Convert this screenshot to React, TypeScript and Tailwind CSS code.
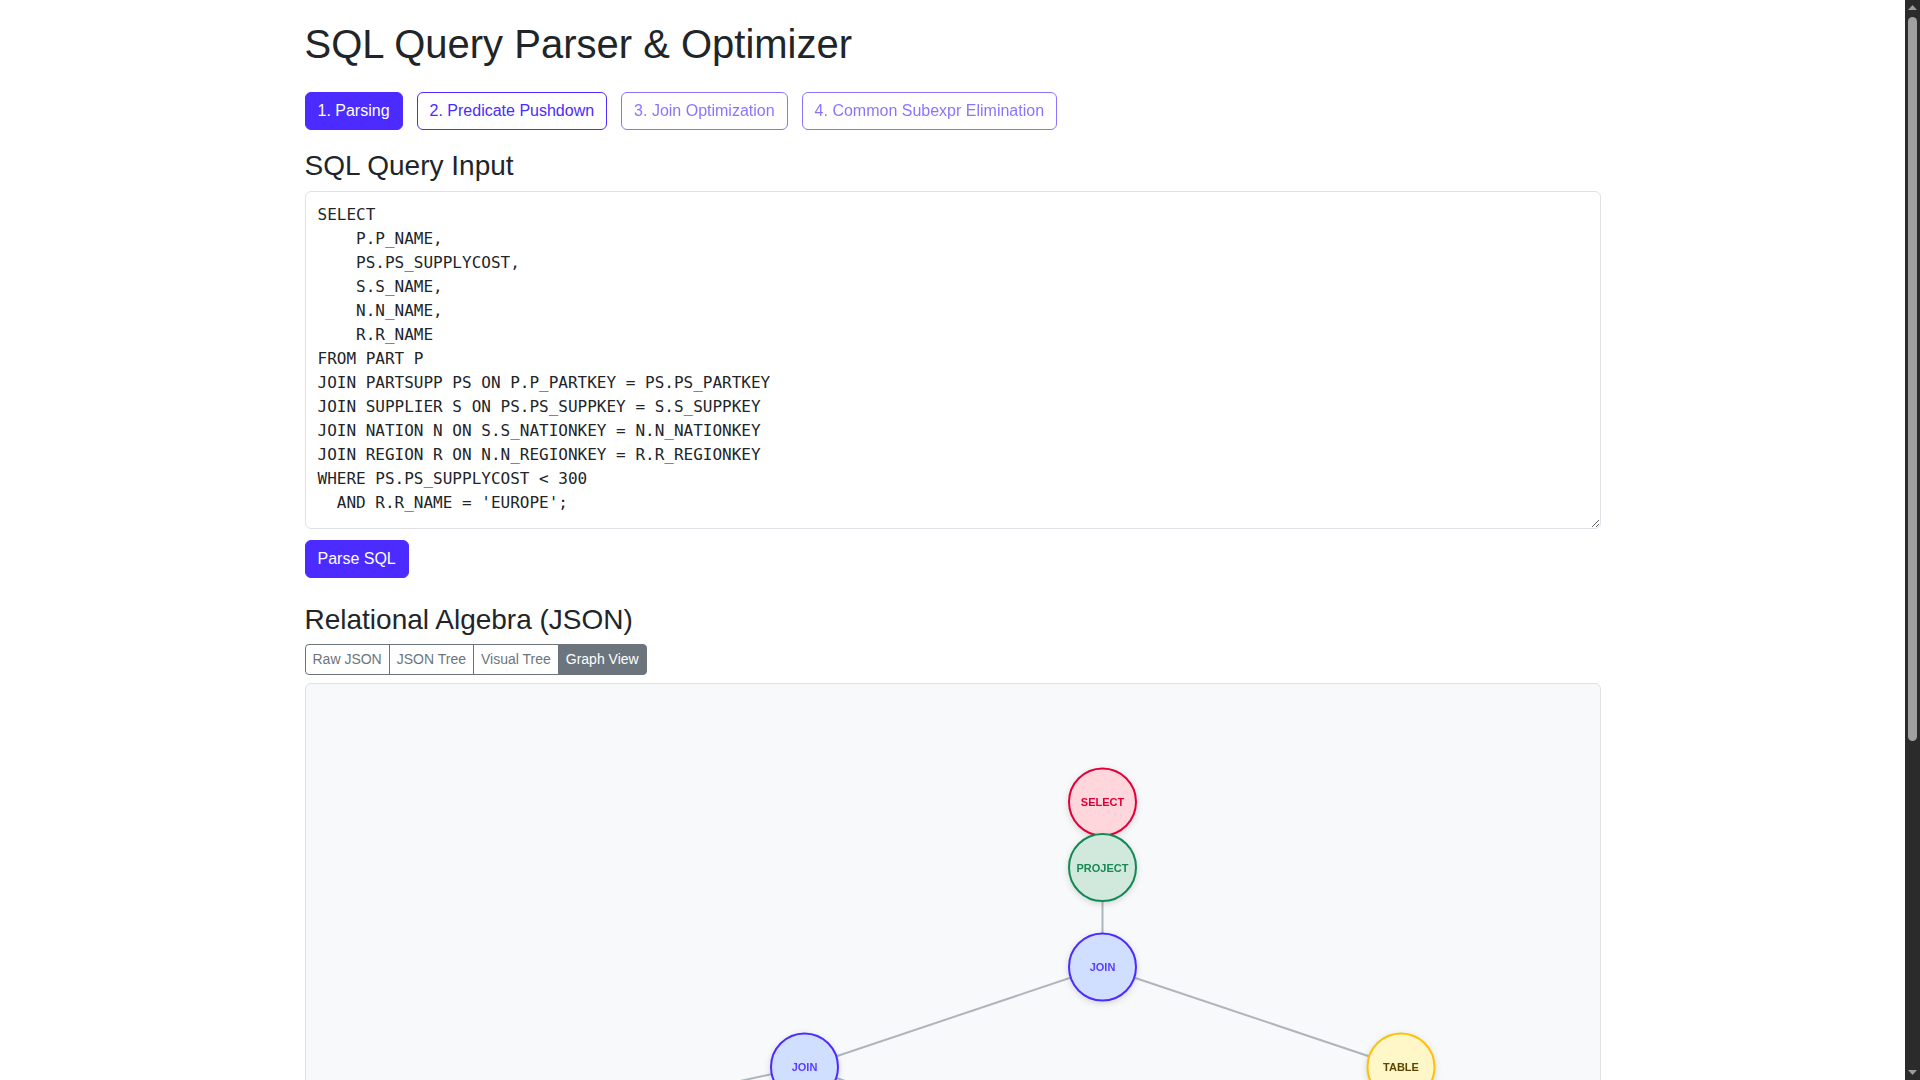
import React from 'react'

const SQL = `SELECT
    P.P_NAME,
    PS.PS_SUPPLYCOST,
    S.S_NAME,
    N.N_NAME,
    R.R_NAME
FROM PART P
JOIN PARTSUPP PS ON P.P_PARTKEY = PS.PS_PARTKEY
JOIN SUPPLIER S ON PS.PS_SUPPKEY = S.S_SUPPKEY
JOIN NATION N ON S.S_NATIONKEY = N.N_NATIONKEY
JOIN REGION R ON N.N_REGIONKEY = R.R_REGIONKEY
WHERE PS.PS_SUPPLYCOST < 300
  AND R.R_NAME = 'EUROPE';`

type Kind = 'select' | 'project' | 'join' | 'table'

interface GraphNode {
  id: string
  label: string
  x: number
  y: number
  kind: Kind
}

const palette: Record<Kind, { fill: string; stroke: string; text: string }> = {
  select: { fill: '#ffd6dc', stroke: '#e3003a', text: '#dc0038' },
  project: { fill: '#d1e9dd', stroke: '#0f8a52', text: '#198754' },
  join: { fill: '#d0dfff', stroke: '#4b2bff', text: '#5a3dff' },
  table: { fill: '#fff7c7', stroke: '#ffc107', text: '#5c4503' },
}

// positions are relative to the inside of the graph panel
const nodes: GraphNode[] = [
  { id: 'sel', label: 'SELECT', x: 796.5, y: 118, kind: 'select' },
  { id: 'proj', label: 'PROJECT', x: 796.5, y: 183.5, kind: 'project' },
  { id: 'j1', label: 'JOIN', x: 796.5, y: 283, kind: 'join' },
  { id: 'j2', label: 'JOIN', x: 498.5, y: 383, kind: 'join' },
  { id: 't1', label: 'TABLE', x: 1095, y: 383, kind: 'table' },
  { id: 'j3', label: 'JOIN', x: 190, y: 450, kind: 'join' },
  { id: 't2', label: 'TABLE', x: 790, y: 483, kind: 'table' },
  { id: 't3', label: 'TABLE', x: 90, y: 560, kind: 'table' },
  { id: 't4', label: 'TABLE', x: 330, y: 570, kind: 'table' },
]

const edges: [string, string][] = [
  ['sel', 'proj'],
  ['proj', 'j1'],
  ['j1', 'j2'],
  ['j1', 't1'],
  ['j2', 'j3'],
  ['j2', 't2'],
  ['j3', 't3'],
  ['j3', 't4'],
]

function GraphView() {
  const byId = (id: string) => nodes.find((n) => n.id === id)!
  return (
    <svg className="block w-full h-full">
      {edges.map(([a, b]) => {
        const s = byId(a)
        const t = byId(b)
        return <line key={a + b} x1={s.x} y1={s.y} x2={t.x} y2={t.y} stroke="#adb5bd" strokeWidth={2} />
      })}
      {nodes.map((n) => {
        const c = palette[n.kind]
        return (
          <g key={n.id} className="drop-shadow-[0_2px_3px_rgba(0,0,0,0.14)]">
            <circle cx={n.x} cy={n.y} r={33.5} fill={c.fill} stroke={c.stroke} strokeWidth={2} />
            <text
              x={n.x}
              y={n.y}
              textAnchor="middle"
              dominantBaseline="central"
              fill={c.text}
              fontSize="11"
              fontWeight="bold"
              fontFamily="'Liberation Sans', Arial, sans-serif"
            >
              {n.label}
            </text>
          </g>
        )
      })}
    </svg>
  )
}

// the browser's own scrollbar is not photographed, so draw it
function ScrollBar() {
  return (
    <aside className="w-[15px] shrink-0 h-full bg-[#2b2b2b] flex flex-col items-center">
      <div className="h-[15px] flex items-center justify-center">
        <svg width="9" height="5" viewBox="0 0 9 5">
          <path d="M0 5 L4.5 0 L9 5 Z" fill="#9c9c9c" />
        </svg>
      </div>
      <div className="mt-[2px] w-[9px] h-[724px] rounded-full bg-[#a0a0a0]" />
      <div className="flex-1" />
      <div className="h-[15px] flex items-center justify-center">
        <svg width="9" height="5" viewBox="0 0 9 5">
          <path d="M0 0 L4.5 5 L9 0 Z" fill="#9c9c9c" />
        </svg>
      </div>
    </aside>
  )
}

const stepBtn = 'px-[12px] py-[6px] text-[16px] leading-[24px] rounded-[6px] border'

export default function App() {
  const views = ['Raw JSON', 'JSON Tree', 'Visual Tree', 'Graph View']
  return (
    <div className="h-screen flex overflow-hidden bg-white">
      <main className="flex-1 min-w-0 h-full overflow-hidden text-[#212529] font-['Liberation_Sans',Arial,sans-serif]">
        <div className="mx-auto max-w-[1320px] px-3 pt-[20px] pb-[73px]">
          <h1 className="text-[40px] leading-[48px]">SQL Query Parser &amp; Optimizer</h1>

          <div className="mt-[24px] flex gap-[14px]">
            <button className={`${stepBtn} bg-[#4b2bff] border-[#4b2bff] text-white`}>1. Parsing</button>
            <button className={`${stepBtn} bg-white border-[#4b2bff] text-[#4b2bff]`}>2. Predicate Pushdown</button>
            <button className={`${stepBtn} bg-white border-[#4b2bff] text-[#4b2bff] opacity-65`}>
              3. Join Optimization
            </button>
            <button className={`${stepBtn} bg-white border-[#4b2bff] text-[#4b2bff] opacity-65`}>
              4. Common Subexpr Elimination
            </button>
          </div>

          <h3 className="mt-[19px] text-[28px] leading-[34px]">SQL Query Input</h3>
          <textarea
            defaultValue={SQL}
            spellCheck={false}
            className="mt-[8px] block w-full h-[338px] px-[12px] pt-[11px] pb-[6px] border border-[#dee2e6] rounded-[6px] bg-white text-[16px] leading-[24px] text-[#212529] font-['DejaVu_Sans_Mono',monospace] outline-none"
          />
          <button className={`${stepBtn} mt-[11px] bg-[#4b2bff] border-[#4b2bff] text-white`}>Parse SQL</button>

          <h3 className="mt-[25px] text-[28px] leading-[34px]">Relational Algebra (JSON)</h3>
          <div className="mt-[7px] flex">
            {views.map((v, i) => (
              <button
                key={v}
                className={`px-[7px] py-[4px] text-[14px] leading-[21px] border border-[#6c757d] ${
                  i > 0 ? '-ml-px' : ''
                } ${i === 0 ? 'rounded-l-[4px]' : ''} ${i === views.length - 1 ? 'rounded-r-[4px]' : ''} ${
                  v === 'Graph View' ? 'bg-[#6c757d] text-white' : 'bg-white text-[#6c757d]'
                }`}
              >
                {v}
              </button>
            ))}
          </div>

          <div className="mt-[8px] h-[800px] border border-[#dee2e6] rounded-[6px] bg-[#f8f9fa] overflow-hidden">
            <GraphView />
          </div>
        </div>
      </main>
      <ScrollBar />
    </div>
  )
}
